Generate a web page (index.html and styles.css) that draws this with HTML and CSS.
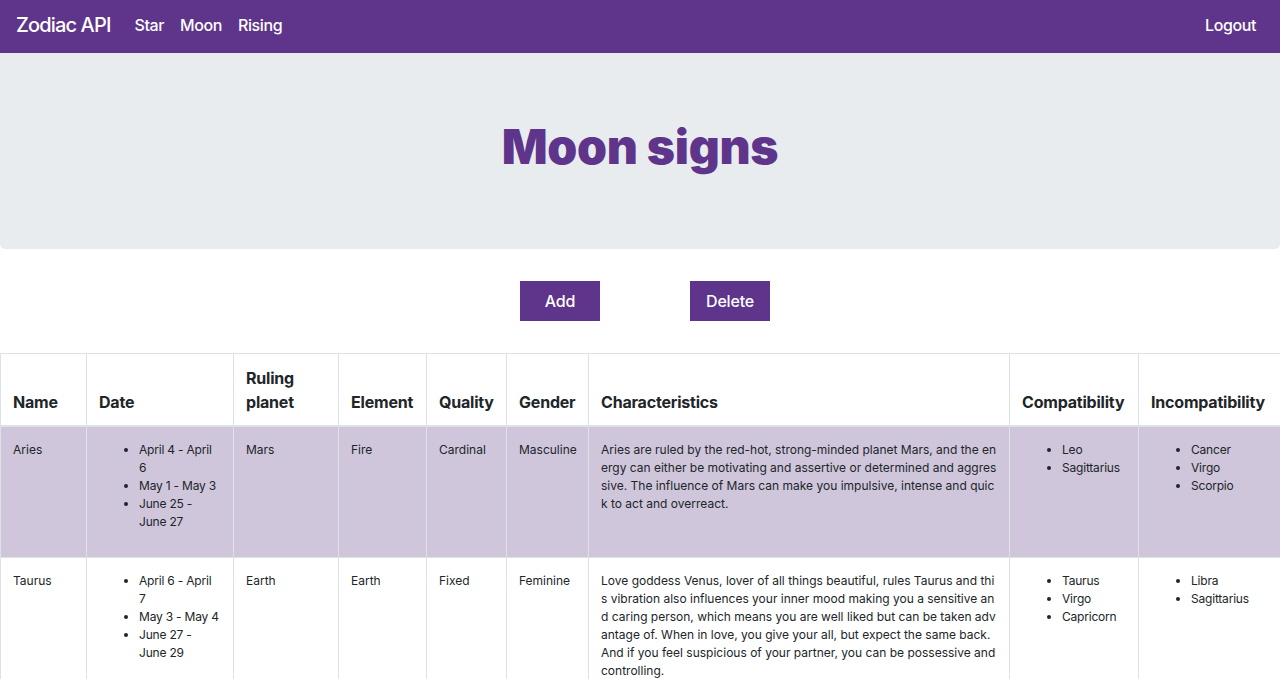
FILE: index.html
```html
<!DOCTYPE html>
<html lang="en">
<head>
<meta charset="utf-8">
<title>Zodiac API - Moon signs</title>
<link rel="stylesheet" href="styles.css">
</head>
<body>
<nav class="navbar">
  <a class="brand" href="#">Zodiac API</a>
  <ul class="nav-links">
    <li><a class="nav-link" href="#">Star</a></li>
    <li><a class="nav-link" href="#">Moon</a></li>
    <li><a class="nav-link" href="#">Rising</a></li>
  </ul>
  <a class="nav-link logout" href="#">Logout</a>
</nav>

<header class="jumbotron">
  <h1 class="title">Moon signs</h1>
</header>

<div class="actions">
  <button class="btn">Add</button>
  <button class="btn">Delete</button>
</div>

<table class="signs">
  <colgroup>
    <col class="c-name"><col class="c-date"><col class="c-planet"><col class="c-element"><col class="c-quality"><col class="c-gender"><col class="c-char"><col class="c-compat"><col class="c-incompat">
  </colgroup>
  <thead>
    <tr>
      <th>Name</th>
      <th>Date</th>
      <th>Ruling planet</th>
      <th>Element</th>
      <th>Quality</th>
      <th>Gender</th>
      <th>Characteristics</th>
      <th>Compatibility</th>
      <th>Incompatibility</th>
    </tr>
  </thead>
  <tbody>
    <tr class="striped">
      <td>Aries</td>
      <td><ul><li>April 4 - April 6</li><li>May 1 - May 3</li><li>June 25 - June 27</li></ul></td>
      <td>Mars</td>
      <td>Fire</td>
      <td>Cardinal</td>
      <td>Masculine</td>
      <td><p class="desc">Aries are ruled by the red-hot, strong-minded planet Mars, and the energy can either be motivating and assertive or determined and aggressive. The influence of Mars can make you impulsive, intense and quick to act and overreact.</p></td>
      <td><ul><li>Leo</li><li>Sagittarius</li></ul></td>
      <td><ul><li>Cancer</li><li>Virgo</li><li>Scorpio</li></ul></td>
    </tr>
    <tr>
      <td>Taurus</td>
      <td><ul><li>April 6 - April 7</li><li>May 3 - May 4</li><li>June 27 - June 29</li></ul></td>
      <td>Earth</td>
      <td>Earth</td>
      <td>Fixed</td>
      <td>Feminine</td>
      <td><p class="desc">Love goddess Venus, lover of all things beautiful, rules Taurus and this vibration also influences your inner mood making you a sensitive and caring person, which means you are well liked but can be taken advantage of. When in love, you give your all, but expect the same back. And if you feel suspicious of your partner, you can be possessive and controlling.</p></td>
      <td><ul><li>Taurus</li><li>Virgo</li><li>Capricorn</li></ul></td>
      <td><ul><li>Libra</li><li>Sagittarius</li></ul></td>
    </tr>
  </tbody>
</table>
</body>
</html>
```

FILE: styles.css
```css
* { box-sizing: border-box; }

body {
  margin: 0;
  font-family: Inter, "Noto Sans", "Liberation Sans", sans-serif;
  color: #212529;
  background: #fff;
}

.navbar {
  display: flex;
  align-items: center;
  height: 53px;
  padding: 0 16px 4px;
  background: #5e358a;
}

.brand {
  color: #fff;
  text-decoration: none;
  font-size: 20px;
  font-weight: 500;
  margin-right: 16px;
  letter-spacing: -0.85px;
}

.nav-links {
  display: flex;
  list-style: none;
  margin: 0;
  padding: 0;
  flex: 1;
}

.nav-link {
  color: #fff;
  text-decoration: none;
  font-size: 16px;
  font-weight: 500;
  padding: 0 8px;
  letter-spacing: -0.4px;
}

.jumbotron {
  background: #e9ecef;
  border-radius: 0 0 5px 5px;
  padding: 65px 32px 64px;
  margin-bottom: 32px;
  text-align: center;
  height: 196px;
}

.title {
  margin: 0;
  font-size: 48px;
  line-height: 57px;
  font-weight: 900;
  color: #5e358a;
  letter-spacing: -0.3px;
}

.actions {
  display: flex;
  justify-content: center;
  gap: 90px;
  padding-left: 10px;
  margin-bottom: 32px;
}

.btn {
  width: 80px;
  height: 40px;
  border: 0;
  border-radius: 0;
  background: #5e358a;
  color: #fff;
  font-family: inherit;
  font-size: 16px;
  font-weight: 500;
  letter-spacing: -0.2px;
}

.signs {
  width: 1280px;
  border-collapse: collapse;
  table-layout: fixed;
}

.c-name { width: 86px; }
.c-date { width: 147px; }
.c-planet { width: 105px; }
.c-element { width: 88px; }
.c-quality { width: 80px; }
.c-gender { width: 82px; }
.c-char { width: 421px; }
.c-compat { width: 129px; }
.c-incompat { width: 142px; }

.signs th,
.signs td {
  border: 1px solid #dee2e6;
  padding: 12px;
  text-align: left;
}

.signs th {
  vertical-align: bottom;
  font-size: 16px;
  line-height: 24px;
  font-weight: 700;
  border-bottom: 2px solid #dee2e6;
  letter-spacing: -0.2px;
  padding-bottom: 11px;
}

.signs td {
  vertical-align: top;
  font-size: 12px;
  line-height: 18px;
  padding-top: 14px;
  padding-bottom: 10px;
}

.signs tr.striped td {
  background: #cfc6db;
}

.signs ul {
  margin: 0 0 16px;
  padding-left: 40px;
  letter-spacing: -0.2px;
}

.desc {
  margin: 0 0 16px;
  word-break: break-all;
}
```
